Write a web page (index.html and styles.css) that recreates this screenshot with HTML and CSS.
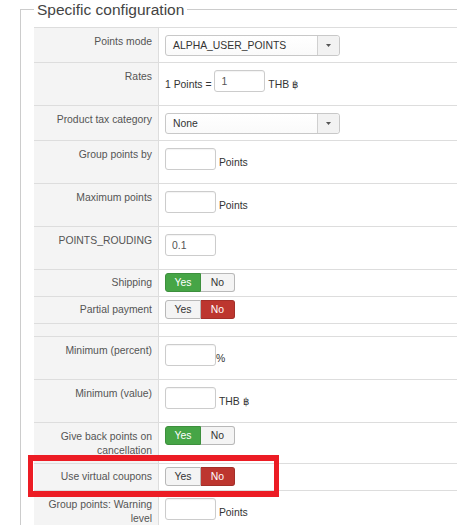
FILE: index.html
```html
<!DOCTYPE html>
<html lang="en">
<head>
    <meta charset="UTF-8">
    <meta name="viewport" content="width=device-width, initial-scale=1.0">
    <title>Specific configuration</title>
    <link rel="stylesheet" href="styles.css">
</head>
<body>
    <div class="page">
        <fieldset class="config">
            <legend>Specific configuration</legend>

            <table class="config-table">
                <tr>
                    <th>Points mode</th>
                    <td>
                        <div class="select">
                            <span class="select-value">ALPHA_USER_POINTS</span>
                            <span class="select-arrow"><svg width="5" height="3" viewBox="0 0 5 3"><polygon points="0,0 5,0 2.5,3" fill="#555"/></svg></span>
                        </div>
                    </td>
                </tr>
                <tr>
                    <th>Rates</th>
                    <td><span class="unit">1 Points =</span> <input class="text-input" type="text" value="1"> <span class="unit">THB ฿</span></td>
                </tr>
                <tr>
                    <th>Product tax category</th>
                    <td>
                        <div class="select">
                            <span class="select-value">None</span>
                            <span class="select-arrow"><svg width="5" height="3" viewBox="0 0 5 3"><polygon points="0,0 5,0 2.5,3" fill="#555"/></svg></span>
                        </div>
                    </td>
                </tr>
                <tr>
                    <th>Group points by</th>
                    <td><input class="text-input" type="text"> <span class="unit">Points</span></td>
                </tr>
                <tr>
                    <th>Maximum points</th>
                    <td><input class="text-input" type="text"> <span class="unit">Points</span></td>
                </tr>
                <tr>
                    <th>POINTS_ROUDING</th>
                    <td><input class="text-input" type="text" value="0.1"></td>
                </tr>
                <tr>
                    <th class="switch-label">Shipping</th>
                    <td class="switch-cell">
                        <div class="switch"><span class="switch-btn yes-on">Yes</span><span class="switch-btn">No</span></div>
                    </td>
                </tr>
                <tr>
                    <th class="switch-label">Partial payment</th>
                    <td class="switch-cell">
                        <div class="switch"><span class="switch-btn">Yes</span><span class="switch-btn no-on">No</span></div>
                    </td>
                </tr>
                <tr class="row-gap">
                    <th></th>
                    <td></td>
                </tr>
                <tr>
                    <th>Minimum (percent)</th>
                    <td><input class="text-input" type="text"><span class="unit">%</span></td>
                </tr>
                <tr>
                    <th>Minimum (value)</th>
                    <td><input class="text-input" type="text"> <span class="unit">THB ฿</span></td>
                </tr>
                <tr>
                    <th>Give back points on cancellation</th>
                    <td class="switch-cell">
                        <div class="switch"><span class="switch-btn yes-on">Yes</span><span class="switch-btn">No</span></div>
                    </td>
                </tr>
                <tr>
                    <th class="switch-label">Use virtual coupons</th>
                    <td class="switch-cell">
                        <div class="switch"><span class="switch-btn">Yes</span><span class="switch-btn no-on">No</span></div>
                    </td>
                </tr>
                <tr>
                    <th>Group points: Warning level</th>
                    <td><input class="text-input" type="text"> <span class="unit">Points</span></td>
                </tr>
            </table>
        </fieldset>

        <!-- marca sobre la fila de cupones -->
        <div class="highlight"></div>
    </div>
</body>
</html>
```

FILE: styles.css
```css
html, body {
    margin: 0;
    overflow: hidden;
    background: #fff;
}
body {
    font-family: "Liberation Sans", Arial, sans-serif;
    font-size: 10.4px;
    color: #333;
}
.page {
    position: relative;
}
.config {
    width: 600px;
    margin: 0 0 0 20px;
    padding: 8px 13px 20px;
    border: 1px solid #ccc;
}
.config legend {
    padding: 0 3px;
    font-size: 15.5px;
    line-height: 19px;
    color: #444;
}
.config-table {
    border-collapse: separate;
    border-spacing: 0;
    width: 100%;
}
.config-table th {
    width: 112px;
    padding: 7px 6px 5px;
    background-color: #f4f4f4;
    border-top: 1px solid #ddd;
    text-align: right;
    font-weight: normal;
    color: #555;
    line-height: 14px;
    vertical-align: top;
}
.config-table td {
    padding: 7px 7px 6px 6px;
    border-top: 1px solid #ddd;
    border-left: 1px solid #ddd;
    line-height: 14px;
    vertical-align: top;
}
.config-table th.switch-label {
    padding-top: 6px;
    padding-bottom: 6px;
}
.config-table td.switch-cell {
    padding-top: 3px;
    padding-bottom: 4px;
}
.config-table .row-gap th,
.config-table .row-gap td {
    padding-top: 6px;
    padding-bottom: 6px;
}
.select {
    display: flex;
    box-sizing: border-box;
    width: 175px;
    height: 21px;
    border: 1px solid #c8c8c8;
    border-radius: 3px;
    background: linear-gradient(#fff, #fafafa);
}
.select-value {
    flex: 1;
    padding-left: 7px;
    line-height: 19px;
    color: #333;
}
.select-arrow {
    display: flex;
    align-items: center;
    justify-content: center;
    width: 21px;
    border-left: 1px solid #d0d0d0;
    background-color: #f2f2f2;
    border-radius: 0 3px 3px 0;
}
.text-input {
    display: inline-block;
    vertical-align: top;
    box-sizing: border-box;
    width: 51px;
    height: 22px;
    margin: 0 0 7px;
    padding: 0 6px;
    border: 1px solid #ccc;
    border-radius: 3px;
    box-shadow: inset 0 1px 1px rgba(0, 0, 0, 0.05);
    font: inherit;
    color: #555;
}
.unit {
    display: inline-block;
    vertical-align: top;
    padding-top: 8px;
}
.switch {
    display: flex;
}
.switch-btn {
    box-sizing: border-box;
    width: 36px;
    height: 19px;
    border: 1px solid #b8b8b8;
    border-radius: 3px 0 0 3px;
    background-color: #f4f4f4;
    color: #333;
    line-height: 17px;
    text-align: center;
}
.switch-btn + .switch-btn {
    width: 34px;
    border-left: none;
    border-radius: 0 3px 3px 0;
}
.switch-btn.yes-on {
    background-color: #46a546;
    border-color: #3d8f3d;
    color: #fff;
}
.switch-btn.no-on {
    background-color: #bd362f;
    border-color: #a22f29;
    color: #fff;
}
.highlight {
    position: absolute;
    left: 28px;
    top: 455px;
    box-sizing: border-box;
    width: 251px;
    height: 42px;
    border: 6px solid #ec1c24;
    border-left-width: 5px;
    border-right-width: 5px;
    pointer-events: none;
}
```
